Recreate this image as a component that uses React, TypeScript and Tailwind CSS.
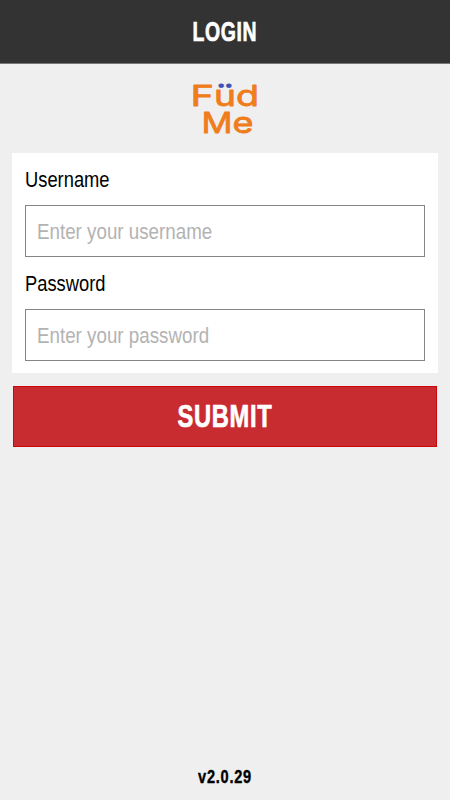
import { useState } from 'react'

function Logo() {
  return (
    <svg
      width="70"
      height="56"
      viewBox="0 0 70 56"
      role="img"
      aria-label="Füd Me"
      className="overflow-visible font-['Inter',sans-serif] text-[29px] font-normal"
    >
      <defs>
        {/* blue dots over an orange u */}
        <linearGradient id="umlaut" gradientUnits="userSpaceOnUse" x1="0" y1="0" x2="0" y2="56">
          <stop offset="0.13" stopColor="#3f51b5" />
          <stop offset="0.13" stopColor="#f07d1c" />
        </linearGradient>
      </defs>
      <g fill="#f07d1c" stroke="#f07d1c" strokeWidth="0.8" strokeLinejoin="round">
        <text x="0.5" y="24.5" textLength="23.5" lengthAdjust="spacingAndGlyphs">F</text>
        <text x="24" y="24.5" textLength="22" lengthAdjust="spacingAndGlyphs" fill="url(#umlaut)" stroke="url(#umlaut)">ü</text>
        <text x="46" y="24.5" textLength="23" lengthAdjust="spacingAndGlyphs">d</text>
        <text x="11.5" y="52" textLength="31" lengthAdjust="spacingAndGlyphs">M</text>
        <text x="42.5" y="52" textLength="21" lengthAdjust="spacingAndGlyphs">e</text>
      </g>
    </svg>
  )
}

function Field({
  label,
  type,
  placeholder,
}: {
  label: string
  type: string
  placeholder: string
}) {
  const [value, setValue] = useState('')

  return (
    <label className="block">
      <span className="block w-fit h-[52px] leading-[54px] text-black origin-left scale-x-[0.833]">{label}</span>
      <div className="h-[52px] pl-[11px] pt-px border border-[#858585] bg-white">
        <input
          type={type}
          value={value}
          onChange={(e) => setValue(e.target.value)}
          placeholder={placeholder}
          className="block w-[450px] h-full bg-transparent placeholder:text-[#b3b3b3] outline-none origin-left scale-x-[0.853]"
        />
      </div>
    </label>
  )
}

export default function App() {
  return (
    <div className="flex flex-col h-screen bg-[#efefef] font-['Liberation_Sans',Arial,sans-serif] text-[22px]">
      <header className="flex items-center justify-center h-16 pt-[2px] bg-[#333333] border-b border-[#777777]">
        <h1 className="text-[27px] font-bold text-white tracking-[0.03em] scale-x-[0.72] [-webkit-text-stroke:0.7px_white]">
          LOGIN
        </h1>
      </header>
      <div className="flex justify-center h-[89px] pt-[17px]">
        <Logo />
      </div>
      <form onSubmit={(e) => e.preventDefault()} className="px-3">
        <div className="px-[13px] h-[220px] bg-white">
          <Field label="Username" type="text" placeholder="Enter your username" />
          <Field label="Password" type="password" placeholder="Enter your password" />
        </div>
        <div className="mt-[13px] px-px">
          <button
            type="submit"
            className="block w-full h-[61px] pb-px bg-[#c92c30] border border-[#cc0508] text-[32px] font-bold text-white"
          >
            <span className="block tracking-[0.03em] scale-x-[0.74] [-webkit-text-stroke:0.7px_white]">SUBMIT</span>
          </button>
        </div>
      </form>
      <footer className="mt-auto h-[46px] leading-[46px] text-center text-[18px] font-bold text-black tracking-[0.05em] scale-x-[0.81] [-webkit-text-stroke:0.4px_black]">
        v2.0.29
      </footer>
    </div>
  )
}
